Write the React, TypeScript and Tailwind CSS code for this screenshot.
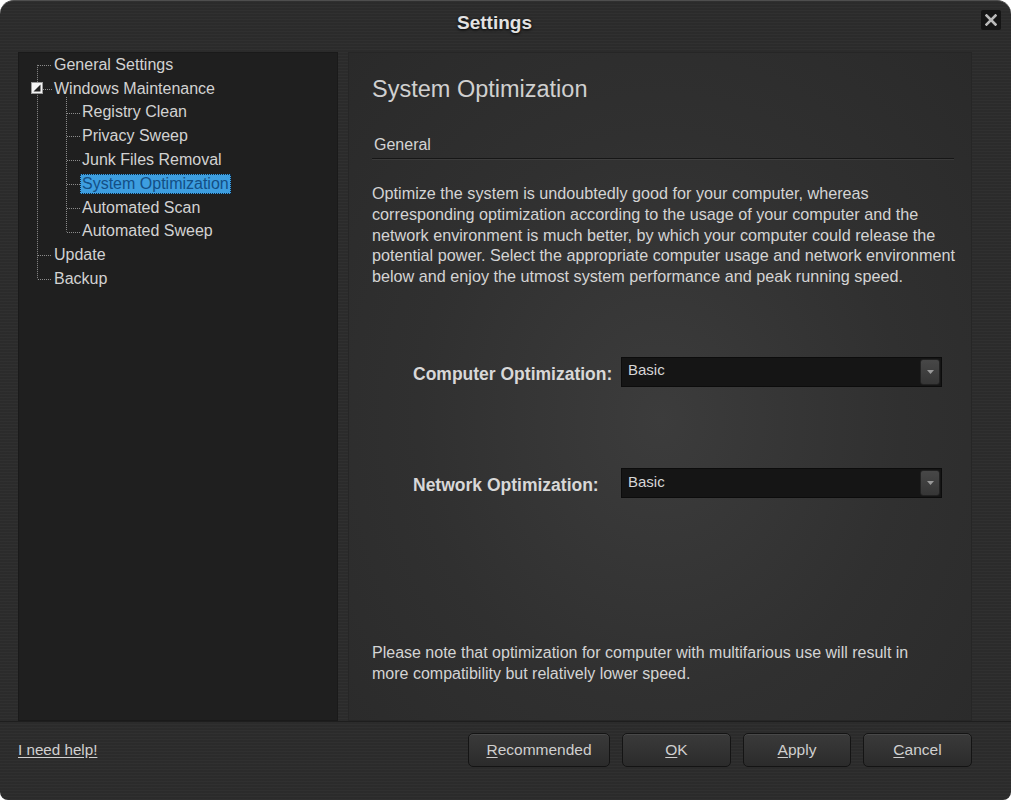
import React from "react";

const tree: { label: string; level: number; selected?: boolean }[] = [
  { label: "General Settings", level: 0 },
  { label: "Windows Maintenance", level: 0 },
  { label: "Registry Clean", level: 1 },
  { label: "Privacy Sweep", level: 1 },
  { label: "Junk Files Removal", level: 1 },
  { label: "System Optimization", level: 1, selected: true },
  { label: "Automated Scan", level: 1 },
  { label: "Automated Sweep", level: 1 },
  { label: "Update", level: 0 },
  { label: "Backup", level: 0 },
];

function TreeLines() {
  const c = (i: number) => 11.9 + 23.8 * i;
  const dot = { stroke: "#8c8c8c", strokeWidth: 1, strokeDasharray: "1 1" } as const;
  return (
    <svg className="absolute left-0 top-0 pointer-events-none" width="320" height="260">
      <line x1="18.5" y1={c(0)} x2="18.5" y2={c(9)} {...dot} />
      {[0, 8, 9].map((i) => (
        <line key={i} x1="19" y1={Math.round(c(i)) + 0.5} x2="33" y2={Math.round(c(i)) + 0.5} {...dot} />
      ))}
      <line x1="24" y1={Math.round(c(1)) + 0.5} x2="33" y2={Math.round(c(1)) + 0.5} {...dot} />
      <line x1="47.5" y1="44" x2="47.5" y2={c(7)} {...dot} />
      {[2, 3, 4, 5, 6, 7].map((i) => (
        <line key={i} x1="48" y1={Math.round(c(i)) + 0.5} x2="61" y2={Math.round(c(i)) + 0.5} {...dot} />
      ))}
      <rect x="12.5" y="29.5" width="11" height="11" fill="#f4f4f4" stroke="#9a9a9a" />
      <polygon points="14.5,38.5 21.5,38.5 21.5,31.5" fill="#222" />
    </svg>
  );
}

function Select({ value }: { value: string }) {
  return (
    <div className="flex items-center w-[321px] h-[30px] bg-[#151515] border border-[#0c0c0c] pl-[6px] pr-[1px]">
      <span className="flex-1 text-[15px] text-[#d6d6d6] -mt-[2px]">{value}</span>
      <div className="w-[20px] h-[26px] rounded-[3px] bg-[linear-gradient(#474747,#363636)] border border-[#222] flex items-center justify-center">
        <svg width="7" height="4" viewBox="0 0 7 4">
          <polygon points="0,0 7,0 3.5,4" fill="#9a9a9a" />
        </svg>
      </div>
    </div>
  );
}

function Button({ w, first, rest }: { w: string; first: string; rest: string }) {
  return (
    <button
      className={`${w} h-[34px] rounded-[5px] border border-[#141414] bg-[linear-gradient(#3a3a3a,#2b2b2b)] shadow-[inset_0_1px_0_rgba(255,255,255,0.08)] text-[15.5px] text-[#cfcfcf] flex items-center justify-center`}
    >
      <span>
        <span className="underline underline-offset-2">{first}</span>
        {rest}
      </span>
    </button>
  );
}

export default function App() {
  return (
    <div className="w-[1011px] h-[800px] bg-white font-['Liberation_Sans',Arial,sans-serif]">
      <div className="w-full h-full flex flex-col rounded-tl-[14px] rounded-tr-[14px] rounded-bl-[8px] rounded-br-[8px] border-t border-[#4e4e4e] bg-[#2c2c2c] bg-[repeating-linear-gradient(0deg,rgba(255,255,255,0.018)_0px,rgba(255,255,255,0.018)_1px,rgba(0,0,0,0.02)_1px,rgba(0,0,0,0.02)_3px)] overflow-hidden">
        {/* Title bar */}
        <div className="relative h-[51px] flex justify-center">
          <div className="mt-[8px] text-[19px] font-bold text-[#e2e2e2] [text-shadow:0_1px_3px_#000] ml-[-22px]">
            Settings
          </div>
          <div className="absolute right-[10px] top-[9px] w-[20px] h-[20px] bg-[#151515] rounded-[2px] flex items-center justify-center">
            <svg width="12" height="12" viewBox="0 0 12 12">
              <path d="M1.5 1.5 L10.5 10.5 M10.5 1.5 L1.5 10.5" stroke="#b9b9b9" strokeWidth="2.6" strokeLinecap="square" />
            </svg>
          </div>
        </div>

        {/* Panels */}
        <div className="flex h-[670px] pl-[18px] gap-[10px] border-b border-[#1e1e1e]">
          <div className="relative w-[320px] h-full bg-[#1f1f1f] border border-[#1a1a1a]">
            <TreeLines />
            <div className="relative flex flex-col text-[16px] text-[#d2d2d2]">
              {tree.map((t) => (
                <div
                  key={t.label}
                  className={`h-[23.8px] flex items-center ${t.level === 0 ? "pl-[35px]" : "pl-[63px]"}`}
                >
                  {t.selected ? (
                    <span className="-ml-[2px] px-[1px] h-[20px] flex items-center bg-[#3d9ee0] text-[#134f85] border border-dotted border-[#0d2a44] leading-none">
                      {t.label}
                    </span>
                  ) : (
                    <span className="leading-none">{t.label}</span>
                  )}
                </div>
              ))}
            </div>
          </div>

          <div className="w-[624px] h-full border border-[#262626] bg-[#2f2f2f] bg-[radial-gradient(ellipse_at_50%_55%,#3c3c3c_0%,#303030_55%,#2a2a2a_100%)] pl-[23px] pr-[17px] flex flex-col text-[#d4d4d4]">
            <div className="mt-[22px] text-[23.5px] leading-[28px] text-[#d0d0d0]">System Optimization</div>
            <div className="mt-[32px] pl-[2px] text-[16px] leading-[20px] pb-[3px] border-b border-[#161616] shadow-[0_1px_0_rgba(255,255,255,0.07)]">
              General
            </div>
            <div className="mt-[24px] text-[16.2px] leading-[20.8px] whitespace-nowrap">
              Optimize the system is undoubtedly good for your computer, whereas
              <br />
              corresponding optimization according to the usage of your computer and the
              <br />
              network environment is much better, by which your computer could release the
              <br />
              potential power. Select the appropriate computer usage and network environment
              <br />
              below and enjoy the utmost system performance and peak running speed.
            </div>

            <div className="mt-[69px] ml-[41px] flex items-center">
              <div className="w-[208px] pt-[5px] text-[17.5px] font-bold text-[#d8d8d8] whitespace-nowrap">
                Computer Optimization:
              </div>
              <Select value="Basic" />
            </div>
            <div className="mt-[80px] ml-[41px] flex items-center">
              <div className="w-[208px] pt-[5px] text-[17.5px] font-bold text-[#d8d8d8] whitespace-nowrap">
                Network Optimization:
              </div>
              <Select value="Basic" />
            </div>

            <div className="mt-[145px] text-[16px] leading-[20.8px] whitespace-nowrap">
              Please note that optimization for computer with multifarious use will result in
              <br />
              more compatibility but relatively lower speed.
            </div>
          </div>
        </div>

        {/* Footer */}
        <div className="flex pl-[18px] pr-[39px] pt-[11px]">
          <div className="pt-[6px] text-[15.2px] text-[#d0d0d0] underline underline-offset-2">I need help!</div>
          <div className="ml-auto flex gap-[12px]">
            <Button w="w-[142px]" first="R" rest="ecommended" />
            <Button w="w-[109px]" first="O" rest="K" />
            <Button w="w-[108px]" first="A" rest="pply" />
            <Button w="w-[109px]" first="C" rest="ancel" />
          </div>
        </div>
      </div>
    </div>
  );
}
